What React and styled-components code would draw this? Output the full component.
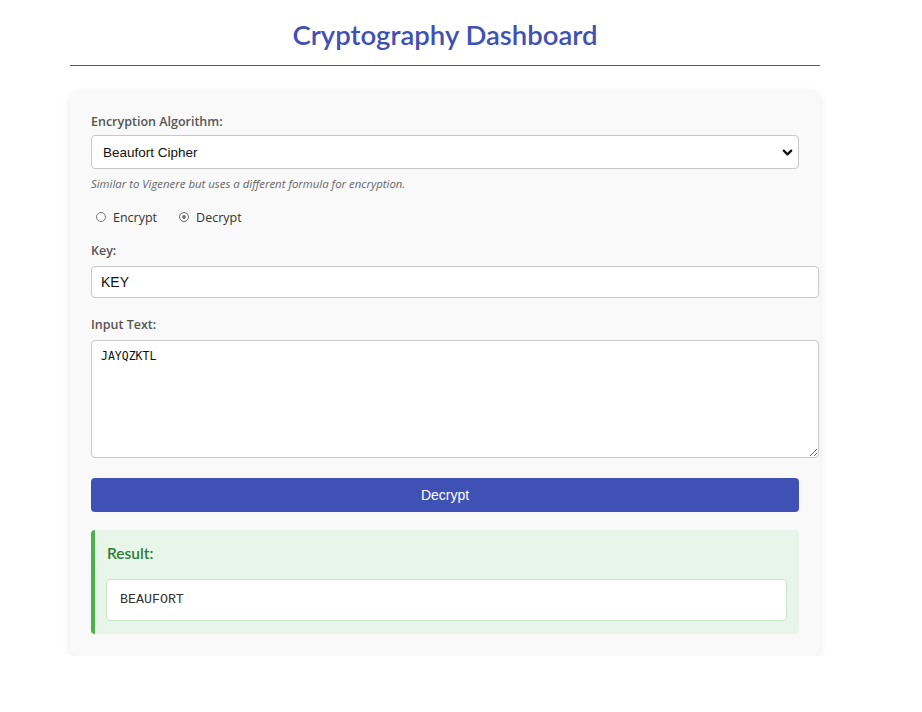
import React, { useState } from "react";
import styled, { createGlobalStyle } from "styled-components";
import { ChevronDown } from "lucide-react";

const GlobalStyle = createGlobalStyle`
  html, body { margin: 0; padding: 0; background: #ffffff; }
  body { font-family: "Open Sans", "Noto Sans", sans-serif; color: #333; }
  * { box-sizing: content-box; }
`;

const Page = styled.div`
  width: 750px;
  margin: 0 0 0 70px;
  padding-top: 18px;
`;

const Title = styled.h1`
  margin: 0;
  font-family: "Lato", "Open Sans", sans-serif;
  font-size: 27.5px;
  line-height: 34px;
  font-weight: 600;
  color: #3f51b5;
  text-align: center;
  padding-bottom: 13px;
  border-bottom: 1px solid #4a5896;
`;

const Card = styled.div`
  margin-top: 25px;
  background: #f9f9f9;
  border-radius: 8px;
  box-shadow: 0 2px 8px rgba(0, 0, 0, 0.09);
  padding: 22px 21px 22px;
`;

const Label = styled.label`
  display: block;
  font-size: 12.5px;
  line-height: 18px;
  font-weight: 600;
  color: #555;
  margin-bottom: ${(p) => p.$mb || 4}px;
`;

const SelectWrap = styled.div`
  position: relative;
  width: 708px;
`;

const Select = styled.select`
  appearance: none;
  -webkit-appearance: none;
  box-sizing: border-box;
  display: block;
  width: 100%;
  height: 34px;
  padding: 0 11px;
  font-family: "Liberation Sans", Arial, sans-serif;
  font-size: 13.5px;
  color: #111;
  background: #fff;
  border: 1px solid #c8c8c8;
  border-radius: 4px;
  outline: none;
`;

const Chevron = styled.span`
  position: absolute;
  right: 4px;
  top: 10px;
  display: flex;
  pointer-events: none;
  color: #111;
`;

const Description = styled.p`
  margin: 7px 0 0;
  font-size: 11.4px;
  line-height: 15px;
  font-style: italic;
  color: #666;
`;

const RadioGroup = styled.div`
  display: flex;
  align-items: center;
  gap: 22px;
  margin: 18px 0 0 5px;
  height: 16px;
`;

const RadioLabel = styled.label`
  display: flex;
  align-items: center;
  gap: 7px;
  font-size: 12.5px;
  color: #333;
`;

const Radio = styled.input`
  appearance: none;
  -webkit-appearance: none;
  margin: 0;
  width: 8px;
  height: 8px;
  border: 1px solid #777;
  border-radius: 50%;
  background: #fff;
  &:checked {
    background: #777;
    box-shadow: inset 0 0 0 2px #fff;
  }
`;

const Field = styled.div`
  margin-top: ${(p) => p.$mt || 0}px;
`;

const TextInput = styled.input`
  display: block;
  width: 100%;
  padding: 7px 9px;
  height: 16px;
  font-family: "Liberation Sans", Arial, sans-serif;
  font-size: 14px;
  color: #111;
  background: #fff;
  border: 1px solid #c8c8c8;
  border-radius: 4px;
  outline: none;
`;

const TextArea = styled.textarea`
  display: block;
  width: 100%;
  height: 100px;
  padding: 8px 9px;
  font-family: "DejaVu Sans Mono", "Liberation Mono", monospace;
  font-size: 11.5px;
  line-height: 14px;
  color: #111;
  background: #fff;
  border: 1px solid #c8c8c8;
  border-radius: 4px;
  outline: none;
  resize: vertical;
`;

const Button = styled.button`
  display: block;
  box-sizing: border-box;
  width: 708px;
  height: 34px;
  margin-top: 20px;
  border: none;
  border-radius: 4px;
  background: #3f51b5;
  color: #fff;
  font-family: "Liberation Sans", Arial, sans-serif;
  font-size: 14px;
  cursor: pointer;
`;

const Result = styled.div`
  box-sizing: border-box;
  width: 708px;
  margin-top: 18px;
  background: #e8f5e9;
  border-left: 4px solid #4caf50;
  border-radius: 4px;
  padding: 12px 12px 13px 11px;
`;

const ResultTitle = styled.h3`
  margin: 0 0 0 1px;
  font-family: "Lato", "Open Sans", sans-serif;
  font-size: 15.5px;
  line-height: 22px;
  font-weight: 600;
  color: #2e7d32;
`;

const Output = styled.div`
  margin-top: 15px;
  background: #fff;
  border: 1px solid #c8e6c9;
  border-radius: 4px;
  padding: 13px 13px;
  font-family: "Liberation Mono", "Courier New", monospace;
  font-size: 13.3px;
  line-height: 14px;
  color: #333;
`;

export default function App() {
  const [mode, setMode] = useState("decrypt");
  return (
    <>
      <GlobalStyle />
      <Page>
        <Title>Cryptography Dashboard</Title>
        <Card>
          <Label>Encryption Algorithm:</Label>
          <SelectWrap>
            <Select defaultValue="beaufort">
              <option value="beaufort">Beaufort Cipher</option>
              <option value="vigenere">Vigenere Cipher</option>
              <option value="caesar">Caesar Cipher</option>
            </Select>
            <Chevron>
              <ChevronDown size={15} strokeWidth={3.5} />
            </Chevron>
          </SelectWrap>
          <Description>
            Similar to Vigenere but uses a different formula for encryption.
          </Description>
          <RadioGroup>
            <RadioLabel>
              <Radio
                type="radio"
                name="mode"
                checked={mode === "encrypt"}
                onChange={() => setMode("encrypt")}
              />
              Encrypt
            </RadioLabel>
            <RadioLabel>
              <Radio
                type="radio"
                name="mode"
                checked={mode === "decrypt"}
                onChange={() => setMode("decrypt")}
              />
              Decrypt
            </RadioLabel>
          </RadioGroup>
          <Field $mt={17}>
            <Label $mb={6}>Key:</Label>
            <TextInput defaultValue="KEY" />
          </Field>
          <Field $mt={18}>
            <Label $mb={6}>Input Text:</Label>
            <TextArea defaultValue="JAYQZKTL" />
          </Field>
          <Button>Decrypt</Button>
          <Result>
            <ResultTitle>Result:</ResultTitle>
            <Output>BEAUFORT</Output>
          </Result>
        </Card>
      </Page>
    </>
  );
}
